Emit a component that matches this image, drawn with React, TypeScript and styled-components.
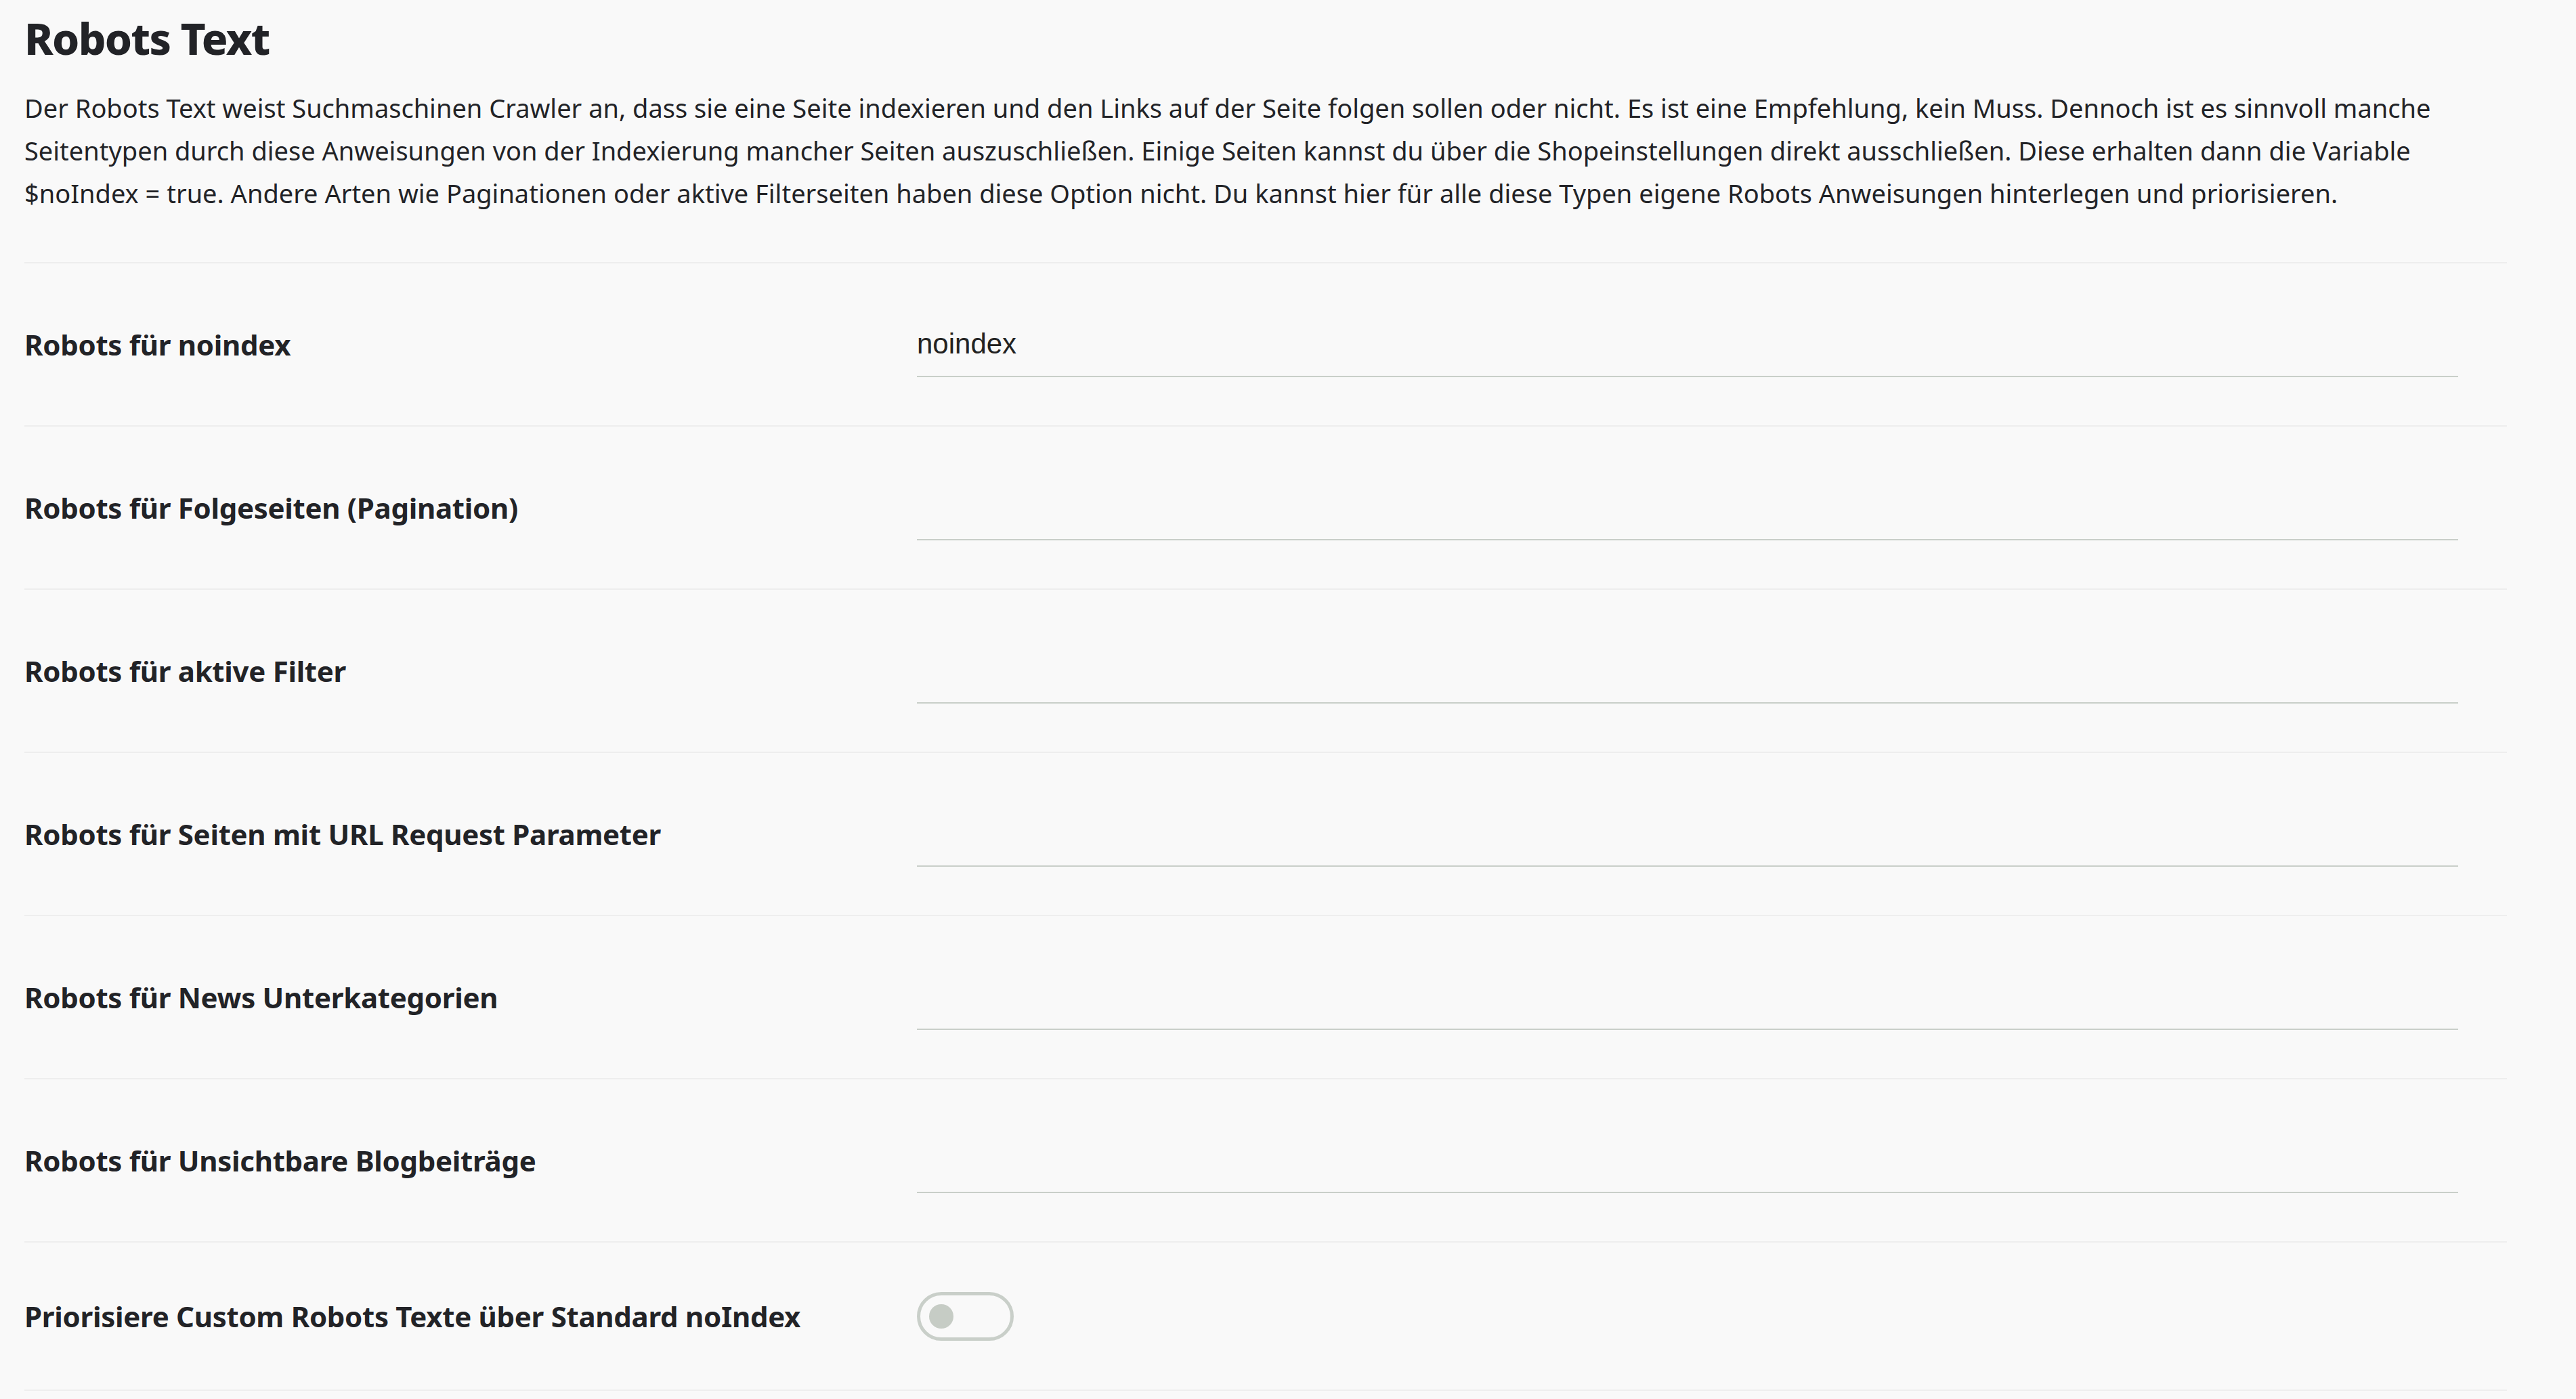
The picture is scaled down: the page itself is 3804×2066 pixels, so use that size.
import * as React from "react"
import styled, { createGlobalStyle } from "styled-components"

const GlobalStyle = createGlobalStyle`
    html, body {
        margin: 0;
        padding: 0;
        background: #f9f9f9;
    }

    body {
        font-family: "Noto Sans", "Open Sans", sans-serif;
        color: #222327;
    }
`

const Page = styled.div`
    width: 3666px;
    padding: 0 0 0 36px;
`

const Title = styled.h1`
    margin: 0;
    padding-top: 12px;
    font-size: 64px;
    line-height: 90px;
    font-weight: 800;
    letter-spacing: -1.6px;
`

const Intro = styled.p`
    margin: 26px 0 0;
    font-size: 38px;
    line-height: 63px;
    font-weight: 400;
    padding-bottom: 70px;
`

const Row = styled.div<{ $compact?: boolean }>`
    display: grid;
    grid-template-columns: 1318px 2276px;
    align-items: center;
    height: ${p => (p.$compact ? 217 : 239)}px;
    border-top: 2px solid #eeeeee;

    &:last-child {
        border-bottom: 2px solid #eeeeee;
    }
`

const Label = styled.label`
    font-size: 42px;
    font-weight: 700;
    letter-spacing: -0.3px;
`

const TextInput = styled.input`
    box-sizing: border-box;
    width: 100%;
    height: 96px;
    padding: 0;
    border: none;
    border-bottom: 2px solid #c9cfc9;
    background: transparent;
    outline: none;
    font-family: "Liberation Sans", Arial, sans-serif;
    font-size: 42px;
    color: #222;
`

const Toggle = styled.span`
    box-sizing: border-box;
    display: inline-flex;
    align-items: center;
    width: 143px;
    height: 72px;
    padding-left: 13px;
    border: 5px solid #c9cfc9;
    border-radius: 36px;
    background: transparent;
`

const Knob = styled.span`
    width: 36px;
    height: 36px;
    border-radius: 50%;
    background: #c6ccc5;
`

const introLines = [
    "Der Robots Text weist Suchmaschinen Crawler an, dass sie eine Seite indexieren und den Links auf der Seite folgen sollen oder nicht. Es ist eine Empfehlung, kein Muss. Dennoch ist es sinnvoll manche",
    "Seitentypen durch diese Anweisungen von der Indexierung mancher Seiten auszuschließen. Einige Seiten kannst du über die Shopeinstellungen direkt ausschließen. Diese erhalten dann die Variable",
    "$noIndex = true. Andere Arten wie Paginationen oder aktive Filterseiten haben diese Option nicht. Du kannst hier für alle diese Typen eigene Robots Anweisungen hinterlegen und priorisieren.",
]

const fields = [
    { label: "Robots für noindex", value: "noindex" },
    { label: "Robots für Folgeseiten (Pagination)", value: "" },
    { label: "Robots für aktive Filter", value: "" },
    { label: "Robots für Seiten mit URL Request Parameter", value: "" },
    { label: "Robots für News Unterkategorien", value: "" },
    { label: "Robots für Unsichtbare Blogbeiträge", value: "" },
]

export default function App() {
    return (
        <Page>
            <GlobalStyle />
            <Title>Robots Text</Title>
            <Intro>
                {introLines.map((line, i) => (
                    <React.Fragment key={i}>
                        {line}
                        {i < introLines.length - 1 && <br />}
                    </React.Fragment>
                ))}
            </Intro>
            <div>
                {fields.map(f => (
                    <Row key={f.label}>
                        <Label>{f.label}</Label>
                        <TextInput defaultValue={f.value} />
                    </Row>
                ))}
                <Row $compact>
                    <Label>Priorisiere Custom Robots Texte über Standard noIndex</Label>
                    <Toggle>
                        <Knob />
                    </Toggle>
                </Row>
            </div>
        </Page>
    )
}
